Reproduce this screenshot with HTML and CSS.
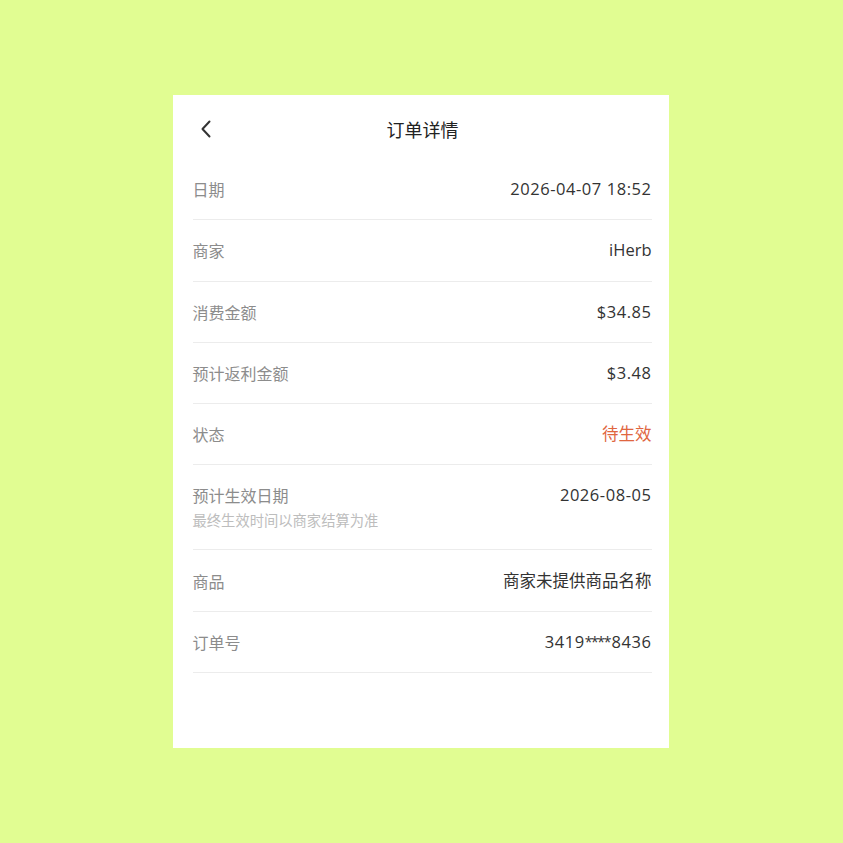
FILE: index.html
```html
<!DOCTYPE html>
<html lang="zh-CN">
<head>
<meta charset="utf-8">
<title>订单详情</title>
<link rel="stylesheet" href="styles.css">
</head>
<body>
<div class="page">
  <div class="card">
    <div class="header">
      <span class="back">
        <svg width="12" height="18" viewBox="0 0 12 18"><path d="M9.5 1.5 L2.5 9 L9.5 16.5" fill="none" stroke="#333" stroke-width="2" stroke-linecap="round" stroke-linejoin="round"/></svg>
      </span>
      <div class="title">订单详情</div>
    </div>
    <div class="list">
      <div class="row"><span class="label">日期</span><span class="value num">2026-04-07 18:52</span></div>
      <div class="row"><span class="label">商家</span><span class="value">iHerb</span></div>
      <div class="row"><span class="label">消费金额</span><span class="value num">$34.85</span></div>
      <div class="row"><span class="label">预计返利金额</span><span class="value num">$3.48</span></div>
      <div class="row"><span class="label">状态</span><span class="value status">待生效</span></div>
      <div class="row tall">
        <div class="labels"><span class="label">预计生效日期</span><span class="sub">最终生效时间以商家结算为准</span></div>
        <span class="value num">2026-08-05</span>
      </div>
      <div class="row"><span class="label">商品</span><span class="value">商家未提供商品名称</span></div>
      <div class="row last"><span class="label">订单号</span><span class="value num">3419<span class="mask">****</span>8436</span></div>
    </div>
  </div>
</div>
</body>
</html>
```
FILE: styles.css
```css
html, body {
  margin: 0;
  padding: 0;
  background: #e1fd92;
  font-family: "Noto Sans CJK SC", "Noto Sans", sans-serif;
}
.page {
  width: 843px;
  height: 843px;
  display: flex;
  justify-content: center;
  padding-top: 95px;
  box-sizing: border-box;
}
.card {
  width: 496px;
  height: 653px;
  background: #ffffff;
  margin-left: -2px;
  padding: 0 17px 0 20px;
  box-sizing: border-box;
}
.header {
  position: relative;
  height: 64px;
  display: flex;
  justify-content: center;
  padding-top: 20px;
  box-sizing: border-box;
}
.back {
  position: absolute;
  left: 7px;
  top: 25px;
  width: 12px;
  height: 18px;
  display: block;
}
.back svg { display: block; }
.title {
  font-size: 18px;
  line-height: 28px;
  color: #222;
  margin-left: 1px;
}
.row {
  height: 60.3px;
  border-bottom: 1px solid #ececec;
  display: flex;
  justify-content: space-between;
  align-items: center;
}
.row.tall {
  height: 85px;
  align-items: flex-start;
  padding-top: 18px;
  box-sizing: border-box;
}
.labels {
  display: flex;
  flex-direction: column;
}
.label {
  font-size: 16px;
  line-height: 24px;
  color: #8c8c8c;
}
.sub {
  font-size: 14.3px;
  line-height: 20px;
  margin-top: 3px;
  color: #bdbdbd;
}
.value {
  font-family: "Open Sans", "Noto Sans CJK SC", sans-serif;
  font-size: 16.5px;
  line-height: 24px;
  color: #333333;
}
.value.num {
  letter-spacing: 0.55px;
}
.mask {
  font-size: 14px;
  letter-spacing: -1.4px;
  margin-right: 1.6px;
  vertical-align: 1px;
}
.status {
  color: #e0663f;
}
```
